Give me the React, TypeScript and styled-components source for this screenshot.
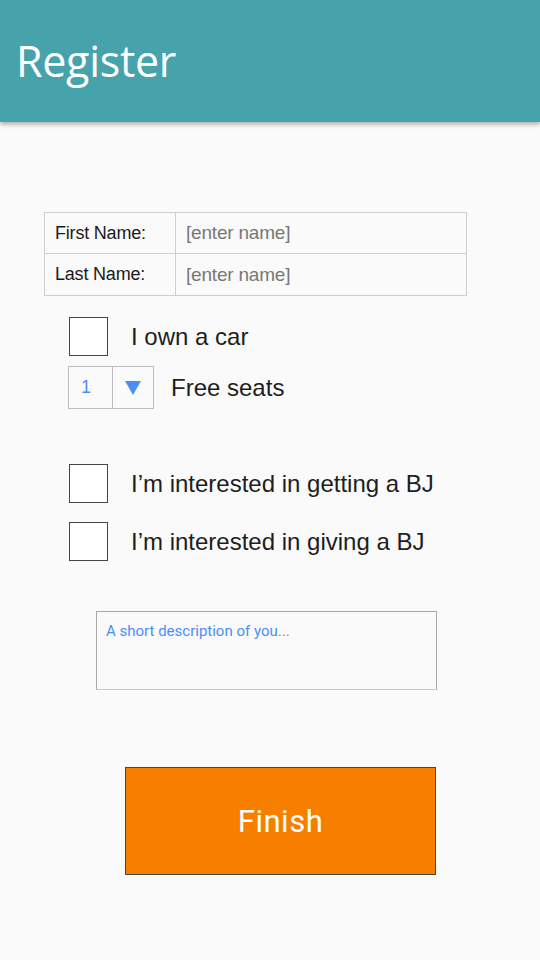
import React from "react";
import styled, { createGlobalStyle } from "styled-components";

const GlobalStyle = createGlobalStyle`
  html, body {
    margin: 0;
    padding: 0;
    background: #fafafa;
    font-family: "Liberation Sans", Arial, sans-serif;
  }
`;

const Page = styled.div`
  width: 540px;
  min-height: 960px;
  background: #fafafa;
  overflow: hidden;
`;

const Header = styled.header`
  height: 122px;
  background: #46a3ac;
  box-shadow: 0 2px 5px rgba(0, 0, 0, 0.35);
  display: flex;
  align-items: center;
  padding: 0 0 0 16px;
`;

const Title = styled.h1`
  margin: 0 0 2px;
  font-family: "Open Sans", sans-serif;
  font-weight: 400;
  font-size: 43px;
  color: #ffffff;
  letter-spacing: -0.3px;
`;

const Form = styled.div`
  padding: 90px 0 0 44px;
  display: flex;
  flex-direction: column;
`;

const NameTable = styled.div`
  width: 421px;
  border: 1px solid #cfcfcf;
  display: grid;
  grid-template-columns: 131px 1fr;
`;

const Cell = styled.div<{ $label?: boolean; $last?: boolean }>`
  height: 41px;
  display: flex;
  align-items: center;
  box-sizing: border-box;
  padding-left: 10px;
  border-right: ${(p) => (p.$label ? "1px solid #cfcfcf" : "none")};
  border-bottom: ${(p) => (p.$last ? "none" : "1px solid #cfcfcf")};
  font-size: ${(p) => (p.$label ? "18px" : "19px")};
  color: ${(p) => (p.$label ? "#1a1a1a" : "#777777")};
  letter-spacing: -0.2px;
`;

const Row = styled.div<{ $top: number }>`
  display: flex;
  align-items: center;
  margin-top: ${(p) => p.$top}px;
  margin-left: 25px;
`;

const Box = styled.div`
  width: 37px;
  height: 37px;
  border: 1px solid #444;
  background: #fff;
  flex-shrink: 0;
`;

const Label = styled.span<{ $gap: number }>`
  margin-left: ${(p) => p.$gap}px;
  font-size: 24px;
  color: #1e1e1e;
`;

const Select = styled.div`
  display: flex;
  height: 41px;
  border: 1px solid #bdbdbd;
  margin-left: -1px;
`;

const SelectValue = styled.div`
  width: 44px;
  box-sizing: border-box;
  padding-left: 12px;
  display: flex;
  align-items: center;
  font-size: 18px;
  color: #4a8ef5;
  border-right: 1px solid #bdbdbd;
`;

const SelectArrow = styled.div`
  width: 40px;
  display: flex;
  align-items: center;
  justify-content: center;
`;

const Description = styled.div`
  width: 339px;
  height: 77px;
  margin: 50px 0 0 52px;
  border: 1px solid #a8a8a8;
  border-bottom-color: #c8c8c8;
`;

const Placeholder = styled.div`
  padding: 10px 0 0 9px;
  font-family: Roboto, sans-serif;
  font-size: 15px;
  color: #4a8ef5;
`;

const Finish = styled.button`
  width: 311px;
  height: 108px;
  margin: 77px 0 0 81px;
  background: #f77f00;
  border: 1px solid #444;
  color: #fff;
  font-family: Roboto, sans-serif;
  font-size: 31px;
  letter-spacing: 0.5px;
  padding: 0;
  cursor: pointer;
`;

const App: React.FC = () => {
  return (
    <Page>
      <GlobalStyle />
      <Header>
        <Title>Register</Title>
      </Header>
      <Form>
        <NameTable>
          <Cell $label>First Name:</Cell>
          <Cell>[enter name]</Cell>
          <Cell $label $last>Last Name:</Cell>
          <Cell $last>[enter name]</Cell>
        </NameTable>
        <Row $top={21}>
          <Box />
          <Label $gap={23}>I own a car</Label>
        </Row>
        <Row $top={10}>
          <Select>
            <SelectValue>1</SelectValue>
            <SelectArrow>
              <svg width="16" height="14" viewBox="0 0 16 14">
                <polygon points="0,0 16,0 8,14" fill="#4a8ef5" />
              </svg>
            </SelectArrow>
          </Select>
          <Label $gap={17}>Free seats</Label>
        </Row>
        <Row $top={55}>
          <Box />
          <Label $gap={23}>I’m interested in getting a BJ</Label>
        </Row>
        <Row $top={19}>
          <Box />
          <Label $gap={23}>I’m interested in giving a BJ</Label>
        </Row>
        <Description>
          <Placeholder>A short description of you...</Placeholder>
        </Description>
        <Finish>Finish</Finish>
      </Form>
    </Page>
  );
};

export default App;
